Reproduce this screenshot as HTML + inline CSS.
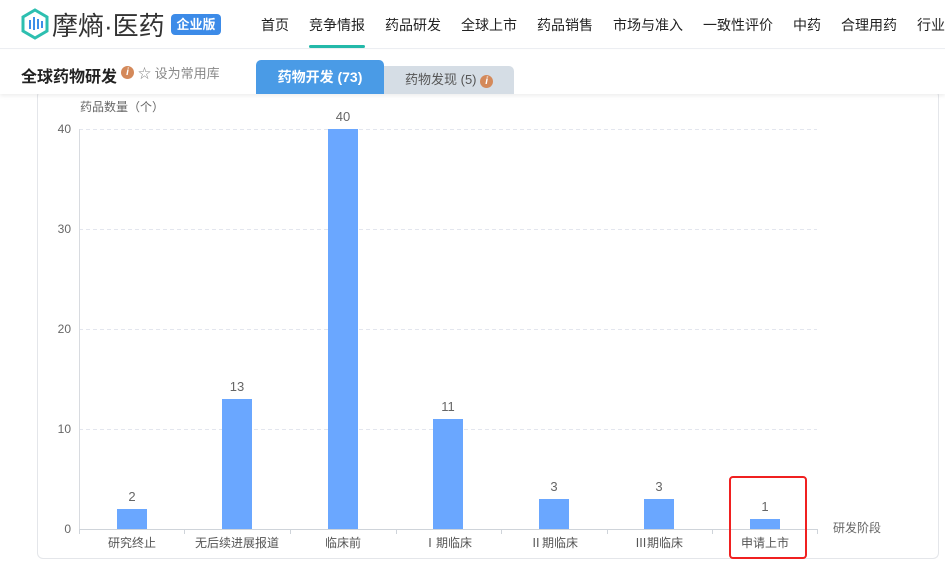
<!DOCTYPE html>
<html><head><meta charset="utf-8"><style>
*{margin:0;padding:0;box-sizing:border-box}
body{width:945px;height:563px;overflow:hidden;background:#fff;font-family:"Liberation Sans","Noto Sans CJK SC",sans-serif;position:relative}
.hdr{position:absolute;left:0;top:0;width:945px;height:49px;border-bottom:1px solid #eceef2;background:#fff}
.nav span{position:absolute;top:15px;font-size:14px;color:#222;white-space:nowrap}
.sub{position:absolute;left:0;top:50px;width:945px;height:44px;background:#fff;box-shadow:0 2px 4px rgba(0,0,0,.07)}
.card{position:absolute;left:37px;top:90px;width:902px;height:469px;border:1px solid #e4e6ea;border-radius:6px;border-top:none}
.dot{display:inline-block;width:13px;height:13px;border-radius:50%;background:#d4895a;color:#fff;font-size:10px;font-weight:bold;text-align:center;line-height:13px;font-style:italic}
</style></head><body>
<div class="card"></div>
<div class="hdr">
<svg style="position:absolute;left:20px;top:8px" width="30" height="32" viewBox="0 0 30 32"><path d="M15 2 L27 9 L27 23 L15 30 L3 23 L3 9 Z" fill="none" stroke="#2dbfb0" stroke-width="3"/><g fill="#3d8ee8"><rect x="9" y="12" width="2" height="9"/><rect x="13" y="9" width="2" height="13"/><rect x="17" y="11" width="2" height="10"/><rect x="21" y="13" width="2" height="7"/></g></svg>
<div style="position:absolute;left:52px;top:6px;font-size:26px;color:#333;letter-spacing:0px;white-space:nowrap">摩熵·医药</div>
<div style="position:absolute;left:171px;top:14px;width:50px;height:21px;background:#3c8be8;border-radius:4px;color:#fff;font-size:13px;font-weight:bold;text-align:center;line-height:21px">企业版</div>
<div class="nav">
<span style="left:261px">首页</span><span style="left:309px">竞争情报</span><span style="left:385px">药品研发</span><span style="left:461px">全球上市</span><span style="left:537px">药品销售</span><span style="left:613px">市场与准入</span><span style="left:703px">一致性评价</span><span style="left:793px">中药</span><span style="left:841px">合理用药</span><span style="left:917px">行业</span>
</div>
<div style="position:absolute;left:309px;top:45px;width:56px;height:3px;background:#23b9a9;border-radius:2px"></div>
</div>
<div class="sub">
<div style="position:absolute;left:21px;top:13px;font-size:16px;font-weight:bold;color:#222">全球药物研发</div>
<span class="dot" style="position:absolute;left:121px;top:16px">i</span>
<div style="position:absolute;left:138px;top:13px;font-size:13px;color:#888">☆ 设为常用库</div>
<div style="position:absolute;left:256px;top:10px;width:128px;height:34px;background:#4a9be6;border-radius:5px 5px 0 0;color:#fff;font-size:14px;font-weight:bold;text-align:center;line-height:34px">药物开发 (73)</div>
<div style="position:absolute;left:384px;top:16px;width:130px;height:28px;background:#d5dde5;border-radius:0 5px 0 0;color:#555;font-size:13px;line-height:28px;padding-left:21px">药物发现 (5) <span class="dot">i</span></div>
</div>
<svg style="position:absolute;left:0;top:0" width="945" height="563">
<g font-family="Liberation Sans,Noto Sans CJK SC,sans-serif" font-size="12" fill="#666">
<text x="80" y="111">药品数量（个）</text>
<g stroke="#e3e6ee" stroke-dasharray="4 3"><line x1="79" y1="129.5" x2="817" y2="129.5"/><line x1="79" y1="229.5" x2="817" y2="229.5"/><line x1="79" y1="329.5" x2="817" y2="329.5"/><line x1="79" y1="429.5" x2="817" y2="429.5"/></g>
<line x1="79.5" y1="129" x2="79.5" y2="529" stroke="#d8dbe0"/>
<line x1="79" y1="529.5" x2="818" y2="529.5" stroke="#cfd4da"/>
<g stroke="#cfd4da"><line x1="79.5" y1="529" x2="79.5" y2="534"/><line x1="184.5" y1="529" x2="184.5" y2="534"/><line x1="290.5" y1="529" x2="290.5" y2="534"/><line x1="396.5" y1="529" x2="396.5" y2="534"/><line x1="501.5" y1="529" x2="501.5" y2="534"/><line x1="607.5" y1="529" x2="607.5" y2="534"/><line x1="712.5" y1="529" x2="712.5" y2="534"/><line x1="817.5" y1="529" x2="817.5" y2="534"/></g>
<g text-anchor="end"><text x="71" y="133">40</text><text x="71" y="233">30</text><text x="71" y="333">20</text><text x="71" y="433">10</text><text x="71" y="533">0</text></g>
<g fill="#6aa7ff"><rect x="117" y="509" width="30" height="20"/><rect x="222" y="399" width="30" height="130"/><rect x="328" y="129" width="30" height="400"/><rect x="433" y="419" width="30" height="110"/><rect x="539" y="499" width="30" height="30"/><rect x="644" y="499" width="30" height="30"/><rect x="750" y="519" width="30" height="10"/></g>
<g text-anchor="middle" font-size="13"><text x="132" y="501">2</text><text x="237" y="391">13</text><text x="343" y="121">40</text><text x="448" y="411">11</text><text x="554" y="491">3</text><text x="659" y="491">3</text><text x="765" y="511">1</text></g>
<g text-anchor="middle" fill="#555"><text x="132" y="547">研究终止</text><text x="237" y="547">无后续进展报道</text><text x="343" y="547">临床前</text><text x="448" y="547">Ⅰ期临床</text><text x="554" y="547">Ⅱ期临床</text><text x="659" y="547">Ⅲ期临床</text><text x="765" y="547">申请上市</text></g>
<text x="833" y="532">研发阶段</text>
</g>
<rect x="730" y="477" width="76" height="81" rx="3" fill="none" stroke="#f02020" stroke-width="2"/>
</svg>
</body></html>
